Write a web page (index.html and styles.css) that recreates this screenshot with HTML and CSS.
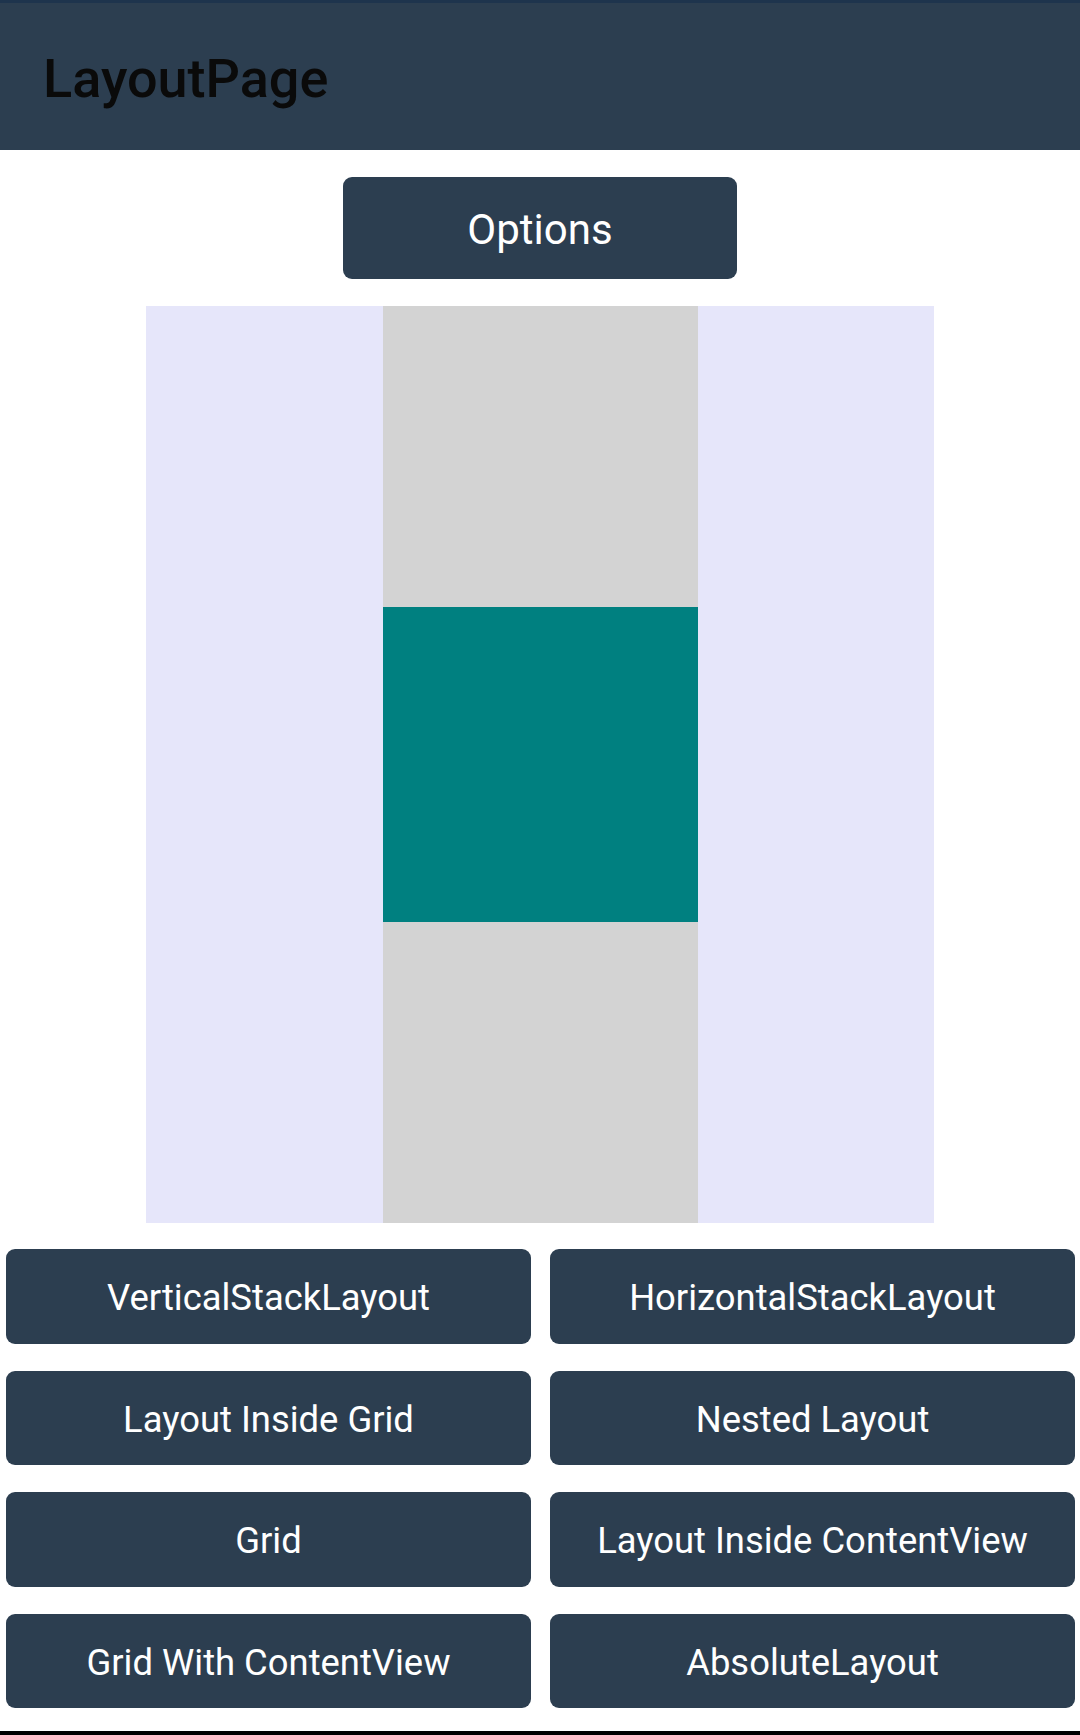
FILE: index.html
```html
<!DOCTYPE html>
<html>
<head>
<meta charset="utf-8">
<link rel="stylesheet" href="styles.css">
</head>
<body>
<div class="page">
  <header class="appbar"><span class="title">LayoutPage</span></header>
  <div class="options-row"><button class="btn options">Options</button></div>
  <div class="demo">
    <div class="side"></div>
    <div class="center">
      <div class="gray"></div>
      <div class="teal"></div>
      <div class="gray"></div>
    </div>
    <div class="side"></div>
  </div>
  <div class="grid">
    <button class="btn">VerticalStackLayout</button>
    <button class="btn">HorizontalStackLayout</button>
    <button class="btn">Layout Inside Grid</button>
    <button class="btn">Nested Layout</button>
    <button class="btn">Grid</button>
    <button class="btn">Layout Inside ContentView</button>
    <button class="btn">Grid With ContentView</button>
    <button class="btn">AbsoluteLayout</button>
  </div>
  <div class="spacer"></div>
  <div class="navline"></div>
</div>
</body>
</html>
```
FILE: styles.css
```css
html, body {
  margin: 0;
  padding: 0;
  background: #ffffff;
}
.page {
  width: 1080px;
  height: 1735px;
  display: flex;
  flex-direction: column;
  font-family: Roboto, "Liberation Sans", sans-serif;
}
.appbar {
  height: 150px;
  border-top: 3px solid #1e344d;
  background: #2c3e50;
  display: flex;
  align-items: center;
  padding-left: 43px;
  padding-top: 5px;
  box-sizing: border-box;
  flex: none;
}
.title {
  font-size: 54px;
  font-weight: 500;
  color: #0a0a0a;
  line-height: 1;
}
.options-row {
  display: flex;
  justify-content: center;
  margin-top: 27px;
  flex: none;
}
.btn {
  border: none;
  margin: 0;
  padding: 3px 0 0;
  box-sizing: border-box;
  background: #2c3e50;
  color: #ffffff;
  border-radius: 9px;
  font-family: Roboto, "Liberation Sans", sans-serif;
  font-size: 36.4px;
  font-weight: 400;
  display: flex;
  align-items: center;
  justify-content: center;
  white-space: nowrap;
}
.options {
  width: 394px;
  height: 102px;
  font-size: 42px;
}
.demo {
  margin: 27px auto 0;
  width: 788px;
  height: 917px;
  background: #e6e6fa;
  display: flex;
  justify-content: center;
  flex: none;
}
.side {
  flex: 1;
}
.center {
  width: 315px;
  display: flex;
  flex-direction: column;
  background: #d3d3d3;
}
.gray {
  flex: 1;
  background: #d3d3d3;
}
.teal {
  height: 315px;
  background: #008080;
  flex: none;
}
.grid {
  margin-top: 26px;
  padding: 0 5px 0 6px;
  display: grid;
  grid-template-columns: 525px 525px;
  column-gap: 19px;
  grid-auto-rows: 94.5px;
  row-gap: 27px;
  flex: none;
}
.spacer {
  flex: 1;
}
.navline {
  height: 4px;
  background: #000000;
  flex: none;
}
```
